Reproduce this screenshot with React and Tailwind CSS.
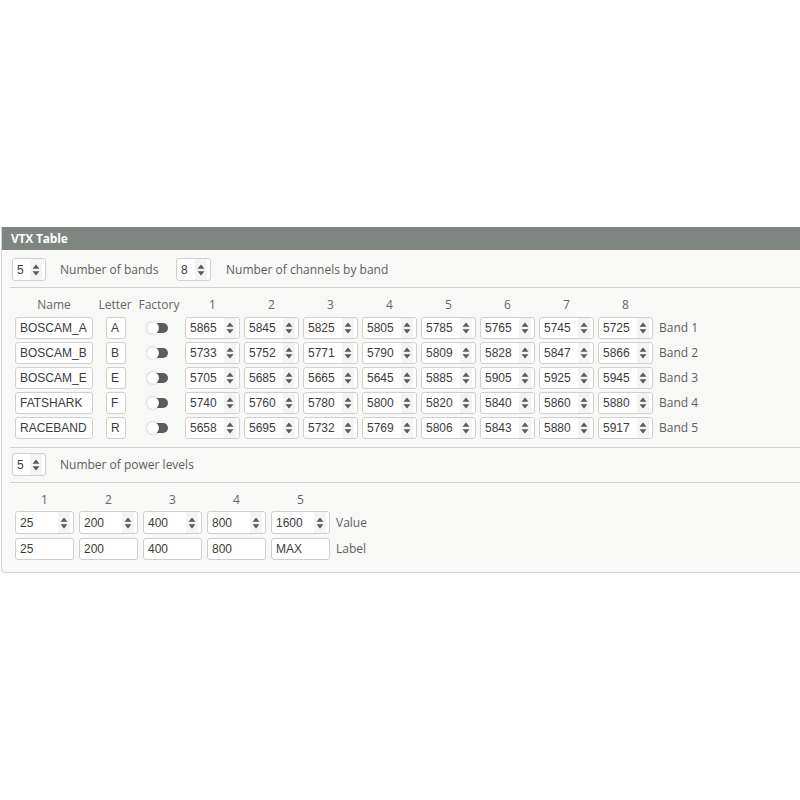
import React from "react";

const bands = [
  { name: "BOSCAM_A", letter: "A", freqs: [5865, 5845, 5825, 5805, 5785, 5765, 5745, 5725] },
  { name: "BOSCAM_B", letter: "B", freqs: [5733, 5752, 5771, 5790, 5809, 5828, 5847, 5866] },
  { name: "BOSCAM_E", letter: "E", freqs: [5705, 5685, 5665, 5645, 5885, 5905, 5925, 5945] },
  { name: "FATSHARK", letter: "F", freqs: [5740, 5760, 5780, 5800, 5820, 5840, 5860, 5880] },
  { name: "RACEBAND", letter: "R", freqs: [5658, 5695, 5732, 5769, 5806, 5843, 5880, 5917] },
];

const powerValues = [25, 200, 400, 800, 1600];
const powerLabels = ["25", "200", "400", "800", "MAX"];

const Arrows = () => (
  <svg width="8" height="12" viewBox="0 0 8 12" className="shrink-0">
    <path d="M4 0.5 L7.5 4.8 L0.5 4.8 Z" fill="#5a5a5a" />
    <path d="M4 11.5 L7.5 7.2 L0.5 7.2 Z" fill="#5a5a5a" />
  </svg>
);

const Spinner = ({ value, className = "" }) => (
  <div
    className={`flex items-center justify-between bg-white border border-[#cfcfcf] rounded-[3px] pl-[4px] pr-[3px] text-[12px] text-[#3c3c3c] ${className}`}
    style={{ fontFamily: '"Liberation Sans", Arial, sans-serif' }}>
    <span>{value}</span>
    <span className="flex items-center justify-center h-full w-[12px] bg-[#f4f4f4]">
      <Arrows />
    </span>
  </div>
);

const TextBox = ({ value, className = "" }) => (
  <div
    className={`flex items-center bg-white border border-[#cfcfcf] rounded-[3px] pl-[4px] text-[12px] text-[#3c3c3c] ${className}`}
    style={{ fontFamily: '"Liberation Sans", Arial, sans-serif' }}>
    {value}
  </div>
);

const Toggle = () => (
  <div className="relative w-[20px] h-[10px] rounded-full bg-[#5c5c5c]">
    <div className="absolute left-[-1px] top-[-1px] w-[12px] h-[12px] rounded-full bg-white shadow-[0_0_2px_rgba(0,0,0,0.35)]" />
  </div>
);

const Divider = () => <div className="ml-[8px] border-t border-[#d2d2d2]" />;

export default function App() {
  return (
    <div
      className="min-h-screen bg-white pt-[227px] text-[12px] text-[#5e5e5e]"
      style={{ fontFamily: '"Open Sans", "Noto Sans", sans-serif' }}>
      <div className="ml-[1px] border-l border-b border-[#d4d4d4] rounded-bl-[4px] bg-[#f8f8f7] pb-[12px]">
        {/* header */}
        <div className="h-[23px] bg-[#7f8682] flex items-center pl-[9px] text-white font-bold text-[12px] tracking-[-0.2px]">
          VTX Table
        </div>

        {/* bands / channels */}
        <div className="flex items-center h-[23px] mt-[8px] pl-[10px]">
          <Spinner value="5" className="w-[34px] h-[23px]" />
          <span className="ml-[14px] w-[102px]">Number of bands</span>
          <Spinner value="8" className="ml-[14px] w-[35px] h-[23px]" />
          <span className="ml-[15px]">Number of channels by band</span>
        </div>
        <div className="mt-[6px]">
          <Divider />
        </div>

        {/* band table */}
        <div className="pl-[13px] mt-[8px]">
          <div className="flex items-center h-[17px] text-[#666]">
            <div className="w-[78px] text-center">Name</div>
            <div className="w-[40px] ml-[2px] text-center">Letter</div>
            <div className="w-[46px] ml-[1px] text-center">Factory</div>
            <div className="flex gap-[4px] ml-[3px]">
              {[1, 2, 3, 4, 5, 6, 7, 8].map((n) => (
                <div key={n} className="w-[55px] text-center">
                  {n}
                </div>
              ))}
            </div>
          </div>
          <div className="flex flex-col gap-[3px] mt-[4px]">
            {bands.map((b, i) => (
              <div key={b.name} className="flex items-center h-[22px]">
                <TextBox value={b.name} className="w-[78px] h-[22px]" />
                <TextBox value={b.letter} className="w-[20px] h-[22px] ml-[13px]" />
                <div className="w-[59px] flex justify-center pl-[5px]">
                  <Toggle />
                </div>
                <div className="flex gap-[4px]">
                  {b.freqs.map((f, j) => (
                    <Spinner key={j} value={f} className="w-[55px] h-[22px]" />
                  ))}
                </div>
                <span className="ml-[6px]">Band {i + 1}</span>
              </div>
            ))}
          </div>
        </div>

        <div className="mt-[8px]">
          <Divider />
        </div>

        {/* power levels */}
        <div className="flex items-center h-[23px] mt-[5px] pl-[10px]">
          <Spinner value="5" className="w-[34px] h-[23px]" />
          <span className="ml-[14px]">Number of power levels</span>
        </div>
        <div className="mt-[6px]">
          <Divider />
        </div>

        <div className="pl-[13px] mt-[8px]">
          <div className="flex gap-[5px] h-[17px] items-center text-[#666]">
            {[1, 2, 3, 4, 5].map((n) => (
              <div key={n} className="w-[59px] text-center">
                {n}
              </div>
            ))}
          </div>
          <div className="flex items-center mt-[3px] h-[23px]">
            <div className="flex gap-[5px]">
              {powerValues.map((v) => (
                <Spinner key={v} value={v} className="w-[59px] h-[23px]" />
              ))}
            </div>
            <span className="ml-[6px]">Value</span>
          </div>
          <div className="flex items-center mt-[4px] h-[22px]">
            <div className="flex gap-[5px]">
              {powerLabels.map((v) => (
                <TextBox key={v} value={v} className="w-[59px] h-[22px]" />
              ))}
            </div>
            <span className="ml-[6px]">Label</span>
          </div>
        </div>
      </div>
    </div>
  );
}
